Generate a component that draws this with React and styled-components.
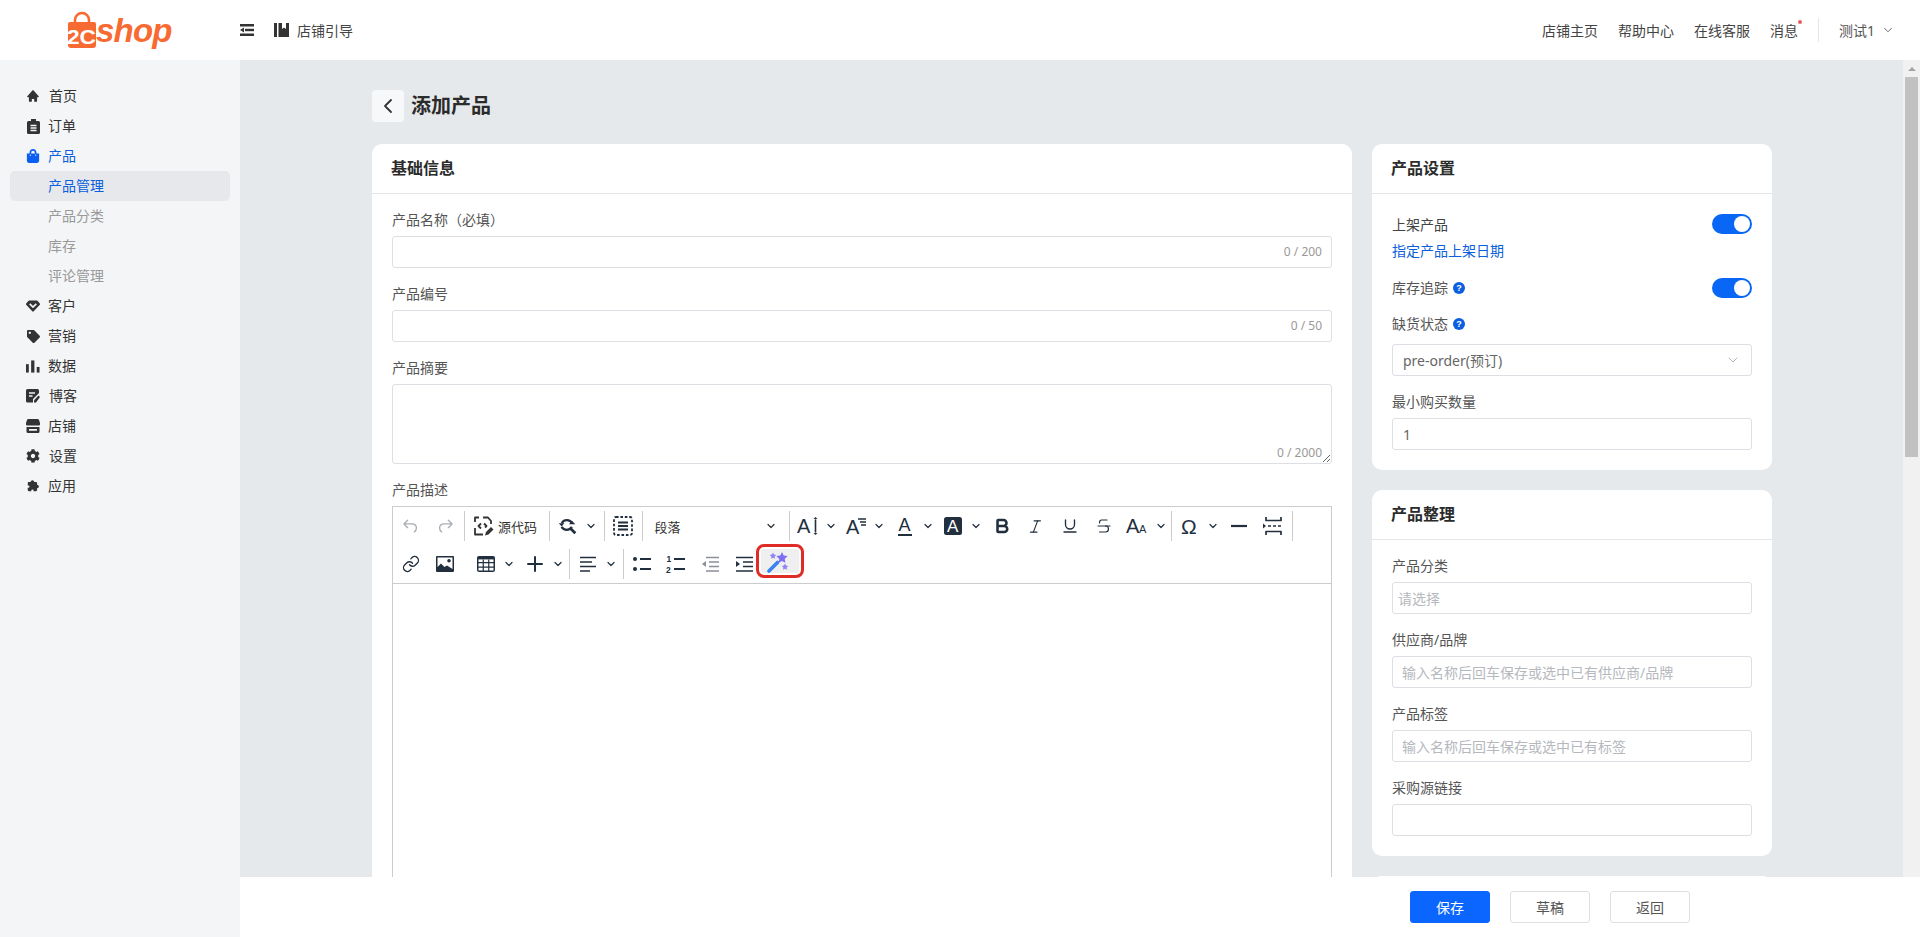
import React from 'react';
import styled, { createGlobalStyle } from 'styled-components';
import { BiSolidHome, BiSolidExtension } from 'react-icons/bi';
import { FaShoppingBag, FaTag, FaCog } from 'react-icons/fa';
import { ChevronDown, ChevronLeft, Bold, Italic, Underline, Strikethrough, Link, Plus } from 'lucide-react';

const GlobalStyle = createGlobalStyle`
  html, body { margin: 0; padding: 0; height: 100%; overflow: hidden; }
  body {
    font-family: "Noto Sans", "Noto Sans CJK SC", sans-serif;
    font-size: 14px;
    color: #333;
  }
  #root { height: 100%; }
  * { box-sizing: border-box; }
`;

// Layout
const Page = styled.div`
  display: flex;
  flex-direction: column;
  height: 937px;
`;

const Header = styled.header`
  display: flex;
  align-items: center;
  flex: 0 0 60px;
  background: #fff;
  padding-right: 25px;
`;

const LogoBox = styled.div`
  display: flex;
  align-items: center;
  width: 240px;
  padding-left: 68px;
`;

const LogoText = styled.span`
  font-family: "Liberation Sans", sans-serif;
  font-size: 33px;
  font-weight: 700;
  font-style: italic;
  letter-spacing: -0.8px;
  color: #f76b32;
  line-height: 60px;
  position: relative;
  top: 1px;
`;

const GuideLink = styled.div`
  display: flex;
  align-items: center;
  gap: 8px;
  margin-left: 20px;
  color: #444;
`;

const HeaderRight = styled.div`
  display: flex;
  align-items: center;
  margin-left: auto;
  color: #444;
`;

const HeaderLink = styled.span`
  margin-left: 20px;
  position: relative;
`;

const Dot = styled.i`
  position: absolute;
  right: -4px;
  top: 0;
  width: 4px;
  height: 4px;
  border-radius: 50%;
  background: #e8605c;
`;

const HeaderDivider = styled.span`
  width: 1px;
  height: 24px;
  background: #e4e6e9;
  margin: 0 20px;
`;

const UserMenu = styled.span`
  display: flex;
  align-items: center;
  gap: 6px;
  color: #555;
`;

const Body = styled.div`
  display: flex;
  flex: 1;
  min-height: 0;
`;

const Sidebar = styled.nav`
  flex: 0 0 240px;
  background: #f3f5f7;
  padding: 21px 10px 0;
`;

const NavItem = styled.div`
  display: flex;
  align-items: center;
  height: 30px;
  padding-left: ${p => (p.$sub ? '38px' : '16px')};
  border-radius: 5px;
  background: ${p => (p.$current ? '#e6e8ec' : 'transparent')};
  color: ${p => (p.$active ? '#0b5fdc' : p.$sub ? '#999' : '#333')};
  line-height: 28px;
`;

const NavIcon = styled.span`
  display: flex;
  align-items: center;
  justify-content: center;
  width: 14px;
  margin-right: ${p => (p.$wide ? '9px' : '8px')};
  color: ${p => (p.$active ? '#0b5ff0' : '#333')};
`;

const Main = styled.div`
  display: flex;
  flex-direction: column;
  flex: 1;
  min-width: 0;
`;

const ContentRow = styled.div`
  display: flex;
  flex: 1;
  min-height: 0;
  background: #e6e9ec;
`;

const Scroller = styled.div`
  flex: 1;
  min-width: 0;
  overflow: hidden;
  padding: 30px 0 0 132px;
`;

const ScrollTrack = styled.div`
  display: flex;
  flex-direction: column;
  align-items: center;
  flex: 0 0 17px;
  background: #f1f1f1;
`;

const ScrollArrow = styled.div`
  flex: 0 0 17px;
  display: flex;
  align-items: center;
  justify-content: center;
  &::before {
    content: '';
    border-left: 4px solid transparent;
    border-right: 4px solid transparent;
    border-bottom: 4px solid #a3a3a3;
  }
`;

const ScrollThumb = styled.div`
  width: 13px;
  height: 380px;
  background: #c1c1c1;
`;

const TitleRow = styled.div`
  display: flex;
  align-items: center;
  gap: 7px;
  height: 32px;
  margin-bottom: 22px;
`;

const BackButton = styled.div`
  display: flex;
  align-items: center;
  justify-content: center;
  width: 32px;
  height: 32px;
  border-radius: 4px;
  background: #f7f8f9;
  color: #333;
`;

const PageTitle = styled.h1`
  margin: 0 0 4px;
  font-size: 20px;
  font-weight: 700;
  color: #2b2b2b;
`;

const Columns = styled.div`
  display: flex;
  align-items: flex-start;
  gap: 20px;
`;

const LeftColumn = styled.div`
  flex: 0 0 980px;
`;

const RightColumn = styled.div`
  display: flex;
  flex-direction: column;
  gap: 20px;
  flex: 0 0 400px;
`;

const Card = styled.section`
  background: #fff;
  border-radius: 10px;
`;

const CardHead = styled.div`
  height: 50px;
  line-height: 49px;
  padding-left: 19px;
  font-size: 16px;
  font-weight: 700;
  color: #2b2b2b;
  border-bottom: 1px solid #e4e6ea;
`;

const CardBody = styled.div`
  padding: ${p => p.$top || 16}px 20px 20px;
`;

const Field = styled.div`
  margin-bottom: ${p => (p.$last ? 0 : '16px')};
  position: relative;
`;

const Label = styled.div`
  display: flex;
  align-items: center;
  gap: 5px;
  height: 20px;
  line-height: 20px;
  margin-top: ${p => p.$top ?? 0}px;
  margin-bottom: ${p => p.$gap ?? 6}px;
  color: #555;
`;

const Help = styled.span`
  display: inline-flex;
  align-items: center;
  justify-content: center;
  width: 12px;
  height: 12px;
  border-radius: 50%;
  background: #0b5fe0;
  color: #fff;
  font-size: 9px;
  font-weight: 700;
  font-family: "Liberation Sans", sans-serif;
`;

const Input = styled.input`
  display: block;
  width: 100%;
  height: 32px;
  padding: 0 ${p => p.$pad ?? 10}px;
  border: 1px solid #dcdfe4;
  border-radius: 3px;
  background: #fff;
  font: inherit;
  color: #666;
  outline: none;
  &::placeholder { color: #b5b8bd; opacity: 1; }
`;

const InputWrap = styled.div`
  position: relative;
`;

const Counter = styled.span`
  position: absolute;
  right: 10px;
  bottom: ${p => (p.$area ? '3px' : '8px')};
  font-size: 12px;
  line-height: 16px;
  color: #999;
`;

const TextArea = styled.textarea`
  display: block;
  width: 100%;
  height: 80px;
  border: 1px solid #dcdfe4;
  border-radius: 3px;
  background: #fff;
  outline: none;
`;

const SelectBox = styled.div`
  display: flex;
  align-items: center;
  justify-content: space-between;
  height: 32px;
  padding: 0 10px;
  border: 1px solid #dcdfe4;
  border-radius: 3px;
  color: #666;
`;

const SwitchRow = styled.div`
  display: flex;
  align-items: center;
  justify-content: space-between;
  height: 20px;
  color: #444;
`;

const Switch = styled.span`
  display: flex;
  justify-content: flex-end;
  align-items: center;
  width: 40px;
  height: 20px;
  padding-right: 2px;
  border-radius: 10px;
  background: #0a66f5;
  &::after {
    content: '';
    width: 16px;
    height: 16px;
    border-radius: 50%;
    background: #fff;
  }
`;

const DateLink = styled.div`
  height: 20px;
  line-height: 20px;
  margin: 7px 0 17px;
  color: #0b5fdc;
`;

// Editor
const Editor = styled.div`
  border: 1px solid #ccc;
  border-bottom: 0;
  height: 640px;
`;

const Toolbar = styled.div`
  border-bottom: 1px solid #ccc;
`;

const ToolRow = styled.div`
  display: flex;
  align-items: center;
  height: 38px;
`;

const ToolGroup = styled.div`
  display: flex;
  align-items: center;
  height: 30px;
  padding: 0 2px 0 1px;
  border-right: ${p => (p.$plain ? '0' : '1px solid #ccc')};
`;

const ToolButton = styled.span`
  display: flex;
  align-items: center;
  justify-content: center;
  flex: 0 0 auto;
  width: ${p => p.$w || 34}px;
  height: 28px;
  margin-left: ${p => p.$ml || 0}px;
  color: ${p => (p.$off ? '#a9adb3' : '#222f3e')};
`;

const SourceButton = styled(ToolButton)`
  justify-content: flex-start;
  padding-left: 5px;
  gap: 3px;
  font-size: 13px;
  color: #333;
`;

const ChevronBox = styled.span`
  display: flex;
  align-items: center;
  flex: 0 0 ${p => p.$w || 14.5}px;
  color: #222f3e;
`;

const FormatSelect = styled.span`
  display: flex;
  align-items: center;
  justify-content: space-between;
  width: 143px;
  height: 28px;
  padding: 0 10px 0 11px;
  font-size: 13px;
  color: #333;
`;

const WandButton = styled.span`
  display: flex;
  align-items: center;
  width: 38px;
  height: 24px;
  margin: 0 0 7px;
  padding-left: 4px;
  border-radius: 3px;
  background: #efefef;
  outline: 3px solid #e02c26;
  outline-offset: 2px;
`;

const IconSvg = styled.svg`
  display: block;
  flex: none;
`;

const GlyphText = styled.text`
  font-family: "Liberation Sans", sans-serif;
  fill: currentColor;
  stroke: none;
`;

// Footer
const Footer = styled.footer`
  display: flex;
  align-items: center;
  justify-content: flex-end;
  gap: 20px;
  flex: 0 0 60px;
  padding-right: 230px;
  background: #fff;
`;

const FootButton = styled.button`
  width: 80px;
  height: 32px;
  border: 1px solid ${p => (p.$primary ? '#0a66ff' : '#dcdfe4')};
  border-radius: 3px;
  background: ${p => (p.$primary ? '#0a66ff' : '#fff')};
  color: ${p => (p.$primary ? '#fff' : '#555')};
  font: inherit;
`;

// Icons
const Svg = ({ size = 24, children, ...rest }) => (
  <IconSvg width={size} height={size} viewBox="0 0 24 24" fill="none" stroke="currentColor" strokeWidth="2" strokeLinecap="round" strokeLinejoin="round" {...rest}>
    {children}
  </IconSvg>
);

const Caret = () => <ChevronDown size={12} strokeWidth={2.4} />;

const Logo = () => (
  <svg width="28" height="38" viewBox="0 0 28 38">
    <path d="M7 13V9a7 7 0 0 1 14 0v4" fill="none" stroke="#f76b32" strokeWidth="2.6" />
    <path d="M2 11h24a2 2 0 0 1 2 2v21a3 3 0 0 1-3 3H3a3 3 0 0 1-3-3V13a2 2 0 0 1 2-2z" fill="#f76b32" />
    <text x="-1" y="33" fontFamily="Liberation Sans, sans-serif" fontSize="20" fontWeight="700" fill="#fff" textLength="29" lengthAdjust="spacingAndGlyphs">2C</text>
  </svg>
);

const MenuFold = () => (
  <svg width="14" height="12" viewBox="0 0 14 12" fill="#333">
    <rect x="0" y="0" width="14" height="2.500" />
    <rect x="5" y="4.800" width="9" height="2.400" />
    <rect x="0" y="9.500" width="14" height="2.500" />
    <path d="M0 6l4-2.600v5.200z" />
  </svg>
);

const BookIcon = () => (
  <svg width="15" height="14" viewBox="0 0 15 14" fill="#333">
    <rect x="0" y="0" width="3" height="14" />
    <path d="M4.500 0H15v14H4.500zM8 0v6l2-1.600L12 6V0z" fillRule="evenodd" />
  </svg>
);

const ClipboardIcon = () => (
  <svg width="13" height="15" viewBox="0 0 13 15">
    <path d="M4 0h5v2h2.500A1.500 1.500 0 0 1 13 3.500V13.500A1.500 1.500 0 0 1 11.500 15h-10A1.500 1.500 0 0 1 0 13.500V3.500A1.500 1.500 0 0 1 1.500 2H4z" fill="#333" />
    <path d="M3.500 6.500h6M3.500 9h6M3.500 11.500h6" stroke="#f3f5f7" strokeWidth="1.300" />
  </svg>
);

const GemIcon = () => (
  <svg width="15" height="12" viewBox="0 0 15 12">
    <path d="M3.500 0h8a1 1 0 0 1 .8.400l2.500 3a1 1 0 0 1 0 1.300L8.300 11.600a1 1 0 0 1-1.600 0L.2 4.700a1 1 0 0 1 0-1.300L2.700.4A1 1 0 0 1 3.500 0z" fill="#333" />
    <path d="M4 3.800l3.500 3.400L11 3.800" fill="none" stroke="#f3f5f7" strokeWidth="1.800" />
  </svg>
);

const ChartIcon = () => (
  <svg width="15" height="13" viewBox="0 0 15 13" fill="#333">
    <rect x="0" y="4" width="3" height="9" />
    <rect x="5.500" y="0" width="3.500" height="13" />
    <rect x="11.500" y="7" width="3" height="6" />
  </svg>
);

const BlogIcon = () => (
  <svg width="14" height="14" viewBox="0 0 14 14">
    <path d="M1.500 0h10A1.500 1.500 0 0 1 13 1.500V4L7 10v3.500H1.500A1.500 1.500 0 0 1 0 12V1.500A1.500 1.500 0 0 1 1.500 0z" fill="#333" />
    <path d="M3 4h6M3 7h3.500" stroke="#f3f5f7" strokeWidth="1.400" />
    <path d="M8 13.500v-2.300l4.500-4.700 1.500 1.600-4 5.400z" fill="#333" />
  </svg>
);

const StoreIcon = () => (
  <svg width="14" height="14" viewBox="0 0 14 14" fill="#333">
    <path d="M2.500 0h9A1.500 1.500 0 0 1 13 1l1 3v1.500a1 1 0 0 1-1 1H1a1 1 0 0 1-1-1V4l1-3A1.500 1.500 0 0 1 2.500 0z" />
    <path fillRule="evenodd" d="M0.500 8h13v4.500a1.500 1.500 0 0 1-1.500 1.500H2a1.500 1.500 0 0 1-1.500-1.500zM3 10v1.800h8V10z" />
  </svg>
);

const UndoIcon = () => (
  <Svg size={20} strokeWidth="1.600"><path d="M8 5 3.500 9.500 8 14M4 9.500h9c3.500 0 5.500 2.200 5.500 5 0 1.800-.8 3.500-2.500 4.500" /></Svg>
);

const RedoIcon = () => (
  <Svg size={20} strokeWidth="1.600"><path d="M16 5l4.500 4.500L16 14M20 9.500h-9c-3.500 0-5.500 2.200-5.500 5 0 1.800.8 3.500 2.500 4.500" /></Svg>
);

const SourceIcon = () => (
  <Svg size={24} strokeWidth="1.800" strokeLinecap="butt">
    <path d="M4 8V3.500h4M12 3.500h5L20 7v3M4 14v6.500h8" />
    <path d="M10 9.500 7.500 12l2.500 2.500M13 9.500l2.500 2.500-1.500 1.500" />
    <path d="M14 21.500l1-3.500 5-5 2.500 2.500-5 5z" fill="currentColor" stroke="none" />
  </Svg>
);

const SearchIcon = () => (
  <Svg size={22} strokeWidth="2.400" strokeLinecap="butt">
    <path d="M14.500 14.500 20 20" strokeWidth="3" />
    <path d="M5.200 8.800A6.500 6.500 0 0 1 16.500 9M16.200 13a6.500 6.500 0 0 1-11.200 0" />
    <path d="M2 9h6l-3 3.500zM13 10h7l-3.500-3.500z" fill="currentColor" stroke="none" />
  </Svg>
);

const SelectAllIcon = () => (
  <Svg size={24} strokeWidth="1.800" strokeLinecap="butt" strokeDasharray="2.600 1.800">
    <rect x="3" y="3" width="18" height="18" rx="2" />
    <path d="M7 8.500h10M7 12h10M7 15.500h10" strokeDasharray="none" />
  </Svg>
);

const LineHeightIcon = () => (
  <Svg size={24} strokeWidth="1.600">
    <GlyphText x="1" y="19" fontSize="20">A</GlyphText>
    <path d="M19.500 6v12" />
    <path d="M17.500 5h4l-2-2zM17.500 19h4l-2 2z" fill="currentColor" stroke="none" />
  </Svg>
);

const SpacingIcon = () => (
  <Svg size={24} strokeWidth="1.500" strokeLinecap="butt">
    <GlyphText x="2" y="20" fontSize="20">A</GlyphText>
    <path d="M14 5h8M16 8h6M17 11h5" />
  </Svg>
);

const FontColorIcon = () => (
  <Svg size={24} strokeWidth="2" strokeLinecap="butt">
    <GlyphText x="5.500" y="17" fontSize="18">A</GlyphText>
    <path d="M5 21h14" />
  </Svg>
);

const BackColorIcon = () => (
  <Svg size={24}>
    <rect x="3" y="3" width="18" height="18" rx="2.500" fill="currentColor" stroke="none" />
    <GlyphText x="6" y="18" fontSize="17" style={{ fill: '#fff' }}>A</GlyphText>
  </Svg>
);

const CaseIcon = () => (
  <Svg size={24}>
    <GlyphText x="0" y="19" fontSize="20">A</GlyphText>
    <GlyphText x="13" y="19" fontSize="11">A</GlyphText>
  </Svg>
);

const OmegaIcon = () => (
  <Svg size={24}>
    <GlyphText x="3" y="20" fontSize="21">Ω</GlyphText>
  </Svg>
);

const DashIcon = () => (
  <Svg size={24} strokeWidth="2.200" strokeLinecap="butt"><path d="M4 12h16" /></Svg>
);

const PageBreakIcon = () => (
  <Svg size={24} strokeWidth="1.700" strokeLinecap="butt">
    <path d="M5 3v3.500h15V3M5 21v-3.500h15V21" />
    <path d="M7 12h3M12 12h3M17 12h3" />
    <path d="M2 9.500v5l3-2.500z" fill="currentColor" stroke="none" />
  </Svg>
);

const ImageIcon = () => (
  <svg width="18" height="16" viewBox="0 0 18 16" fill="#222f3e">
    <path fillRule="evenodd" d="M1 0h16a1 1 0 0 1 1 1v14a1 1 0 0 1-1 1H1a1 1 0 0 1-1-1V1a1 1 0 0 1 1-1zM1.500 1.500v9.500l3.500-3.500 3.500 3.500 2.500-1.500 5.500 3.500V1.500zM13 3a1.800 1.800 0 1 1 0 3.600A1.800 1.800 0 0 1 13 3z" />
  </svg>
);

const TableIcon = () => (
  <Svg size={22} strokeWidth="1.300" strokeLinecap="butt">
    <rect x="3" y="4" width="18" height="16" rx="1.500" strokeWidth="1.600" />
    <path d="M3 5.500h18" strokeWidth="3" />
    <path d="M3 10.500h18M3 15.500h18M9 7v13M15 7v13" />
  </Svg>
);

const AlignIcon = () => (
  <Svg size={24} strokeWidth="1.700" strokeLinecap="butt">
    <path d="M4 5.500h16M4 10h12M4 14.500h16M4 19h10" />
  </Svg>
);

const BulletIcon = () => (
  <Svg size={24} strokeWidth="1.800" strokeLinecap="butt">
    <circle cx="5" cy="7" r="2" fill="currentColor" stroke="none" />
    <circle cx="5" cy="17" r="2" fill="currentColor" stroke="none" />
    <path d="M10 7h11M10 17h11" />
  </Svg>
);

const NumberIcon = () => (
  <Svg size={24} strokeWidth="1.800" strokeLinecap="butt">
    <GlyphText x="2.500" y="10" fontSize="8.500" fontWeight="700">1</GlyphText>
    <GlyphText x="2" y="21" fontSize="8.500" fontWeight="700">2</GlyphText>
    <path d="M10 7h11M10 17h11" />
  </Svg>
);

const OutdentIcon = () => (
  <Svg size={24} strokeWidth="1.600" strokeLinecap="butt" color="#8b9098">
    <path d="M8 5.500h13M11 10h10M11 14.500h10M8 19h13" />
    <path d="M8 9v6l-4-3z" fill="currentColor" stroke="none" />
  </Svg>
);

const IndentIcon = () => (
  <Svg size={24} strokeWidth="1.700" strokeLinecap="butt">
    <path d="M4 5.500h17M11 10h10M11 14.500h10M4 19h17" />
    <path d="M4 9v6l4-3z" fill="currentColor" stroke="none" />
  </Svg>
);

const WandIcon = () => (
  <svg width="24" height="24" viewBox="0 0 24 24">
    <path d="M4 22 12.500 13.500" stroke="#3b82f0" strokeWidth="3.600" strokeLinecap="round" />
    <path d="M17 3l1.700 3.600 3.900.5-2.900 2.800.7 3.900-3.400-1.900-3.400 1.900.7-3.900-2.900-2.800 3.900-.5z" fill="#7d6ff5" />
    <path d="M8 3.500l1 2.100 2.300.3-1.700 1.600.4 2.300L8 8.700 6 9.800l.4-2.300-1.700-1.600L7 5.600zM20 14.500l1 2.100 2.300.3-1.700 1.600.4 2.300-2-1.100-2 1.100.4-2.300-1.700-1.600 2.300-.3z" fill="#8f84f7" />
  </svg>
);

// Data
const navItems = [
  { label: '首页', icon: <BiSolidHome size={20} />, wide: true },
  { label: '订单', icon: <ClipboardIcon /> },
  { label: '产品', icon: <FaShoppingBag size={14} />, active: true },
  { label: '产品管理', sub: true, active: true, current: true },
  { label: '产品分类', sub: true },
  { label: '库存', sub: true },
  { label: '评论管理', sub: true },
  { label: '客户', icon: <GemIcon /> },
  { label: '营销', icon: <FaTag size={13} /> },
  { label: '数据', icon: <ChartIcon /> },
  { label: '博客', icon: <BlogIcon />, wide: true },
  { label: '店铺', icon: <StoreIcon /> },
  { label: '设置', icon: <FaCog size={14} />, wide: true },
  { label: '应用', icon: <BiSolidExtension size={18} /> },
];

const Split = ({ children, w, ml }) => (
  <>
    <ToolButton $ml={ml}>{children}</ToolButton>
    <ChevronBox $w={w}><Caret /></ChevronBox>
  </>
);

const EditorToolbar = () => (
  <Toolbar>
    <ToolRow>
      <ToolGroup>
        <ToolButton $off><UndoIcon /></ToolButton>
        <ToolButton $off><RedoIcon /></ToolButton>
      </ToolGroup>
      <ToolGroup>
        <SourceButton $w={81}><SourceIcon />源代码</SourceButton>
      </ToolGroup>
      <ToolGroup>
        <Split w={16.5}><SearchIcon /></Split>
      </ToolGroup>
      <ToolGroup>
        <ToolButton><SelectAllIcon /></ToolButton>
      </ToolGroup>
      <ToolGroup>
        <FormatSelect>段落<Caret /></FormatSelect>
      </ToolGroup>
      <ToolGroup>
        <Split><LineHeightIcon /></Split>
        <Split><SpacingIcon /></Split>
        <Split><FontColorIcon /></Split>
        <Split><BackColorIcon /></Split>
        <ToolButton><Bold size={18} strokeWidth={3.4} /></ToolButton>
        <ToolButton><Italic size={17} strokeWidth={1.6} /></ToolButton>
        <ToolButton><Underline size={18} strokeWidth={1.8} /></ToolButton>
        <ToolButton><Strikethrough size={18} strokeWidth={1.6} /></ToolButton>
        <Split><CaseIcon /></Split>
      </ToolGroup>
      <ToolGroup>
        <Split><OmegaIcon /></Split>
        <ToolButton><DashIcon /></ToolButton>
        <ToolButton><PageBreakIcon /></ToolButton>
      </ToolGroup>
    </ToolRow>
    <ToolRow>
      <ToolGroup>
        <ToolButton><Link size={18} strokeWidth={1.8} /></ToolButton>
        <ToolButton><ImageIcon /></ToolButton>
        <Split ml={7}><TableIcon /></Split>
        <Split w={15.5}><Plus size={24} strokeWidth={2} /></Split>
      </ToolGroup>
      <ToolGroup>
        <Split w={15.5}><AlignIcon /></Split>
      </ToolGroup>
      <ToolGroup $plain>
        <ToolButton><BulletIcon /></ToolButton>
        <ToolButton><NumberIcon /></ToolButton>
        <ToolButton><OutdentIcon /></ToolButton>
        <ToolButton><IndentIcon /></ToolButton>
        <WandButton><WandIcon /></WandButton>
      </ToolGroup>
    </ToolRow>
  </Toolbar>
);

const App = () => (
  <Page>
    <GlobalStyle />
    <Header>
      <LogoBox>
        <Logo />
        <LogoText>shop</LogoText>
      </LogoBox>
      <MenuFold />
      <GuideLink><BookIcon />店铺引导</GuideLink>
      <HeaderRight>
        <HeaderLink>店铺主页</HeaderLink>
        <HeaderLink>帮助中心</HeaderLink>
        <HeaderLink>在线客服</HeaderLink>
        <HeaderLink>消息<Dot /></HeaderLink>
        <HeaderDivider />
        <UserMenu>测试1 <ChevronDown size={14} strokeWidth={1.5} /></UserMenu>
      </HeaderRight>
    </Header>
    <Body>
      <Sidebar>
        {navItems.map(item => (
          <NavItem key={item.label} $sub={item.sub} $active={item.active} $current={item.current}>
            {item.icon && <NavIcon $active={item.active} $wide={item.wide}>{item.icon}</NavIcon>}
            {item.label}
          </NavItem>
        ))}
      </Sidebar>
      <Main>
        <ContentRow>
          <Scroller>
            <TitleRow>
              <BackButton><ChevronLeft size={24} strokeWidth={1.8} /></BackButton>
              <PageTitle>添加产品</PageTitle>
            </TitleRow>
            <Columns>
              <LeftColumn>
                <Card>
                  <CardHead>基础信息</CardHead>
                  <CardBody>
                    <Field>
                      <Label>产品名称（必填）</Label>
                      <InputWrap>
                        <Input />
                        <Counter>0 / 200</Counter>
                      </InputWrap>
                    </Field>
                    <Field>
                      <Label>产品编号</Label>
                      <InputWrap>
                        <Input />
                        <Counter>0 / 50</Counter>
                      </InputWrap>
                    </Field>
                    <Field>
                      <Label>产品摘要</Label>
                      <InputWrap>
                        <TextArea />
                        <Counter $area>0 / 2000</Counter>
                      </InputWrap>
                    </Field>
                    <Field $last>
                      <Label>产品描述</Label>
                      <Editor>
                        <EditorToolbar />
                      </Editor>
                    </Field>
                  </CardBody>
                </Card>
              </LeftColumn>
              <RightColumn>
                <Card>
                  <CardHead>产品设置</CardHead>
                  <CardBody $top={20}>
                    <SwitchRow>上架产品<Switch /></SwitchRow>
                    <DateLink>指定产品上架日期</DateLink>
                    <SwitchRow><Label $gap={0}>库存追踪<Help>?</Help></Label><Switch /></SwitchRow>
                    <Field>
                      <Label $gap={10} $top={16}>缺货状态<Help>?</Help></Label>
                      <SelectBox>pre-order(预订)<ChevronDown size={16} strokeWidth={1.3} color="#aaa" /></SelectBox>
                    </Field>
                    <Field $last>
                      <Label>最小购买数量</Label>
                      <Input defaultValue="1" />
                    </Field>
                  </CardBody>
                </Card>
                <Card>
                  <CardHead>产品整理</CardHead>
                  <CardBody>
                    <Field>
                      <Label>产品分类</Label>
                      <Input $pad={5} placeholder="请选择" />
                    </Field>
                    <Field>
                      <Label>供应商/品牌</Label>
                      <Input $pad={9} placeholder="输入名称后回车保存或选中已有供应商/品牌" />
                    </Field>
                    <Field>
                      <Label>产品标签</Label>
                      <Input $pad={9} placeholder="输入名称后回车保存或选中已有标签" />
                    </Field>
                    <Field $last>
                      <Label>采购源链接</Label>
                      <Input />
                    </Field>
                  </CardBody>
                </Card>
                <Card>
                  <CardHead>&nbsp;</CardHead>
                </Card>
              </RightColumn>
            </Columns>
          </Scroller>
          <ScrollTrack>
            <ScrollArrow />
            <ScrollThumb />
          </ScrollTrack>
        </ContentRow>
        <Footer>
          <FootButton $primary>保存</FootButton>
          <FootButton>草稿</FootButton>
          <FootButton>返回</FootButton>
        </Footer>
      </Main>
    </Body>
  </Page>
);

export default App;
